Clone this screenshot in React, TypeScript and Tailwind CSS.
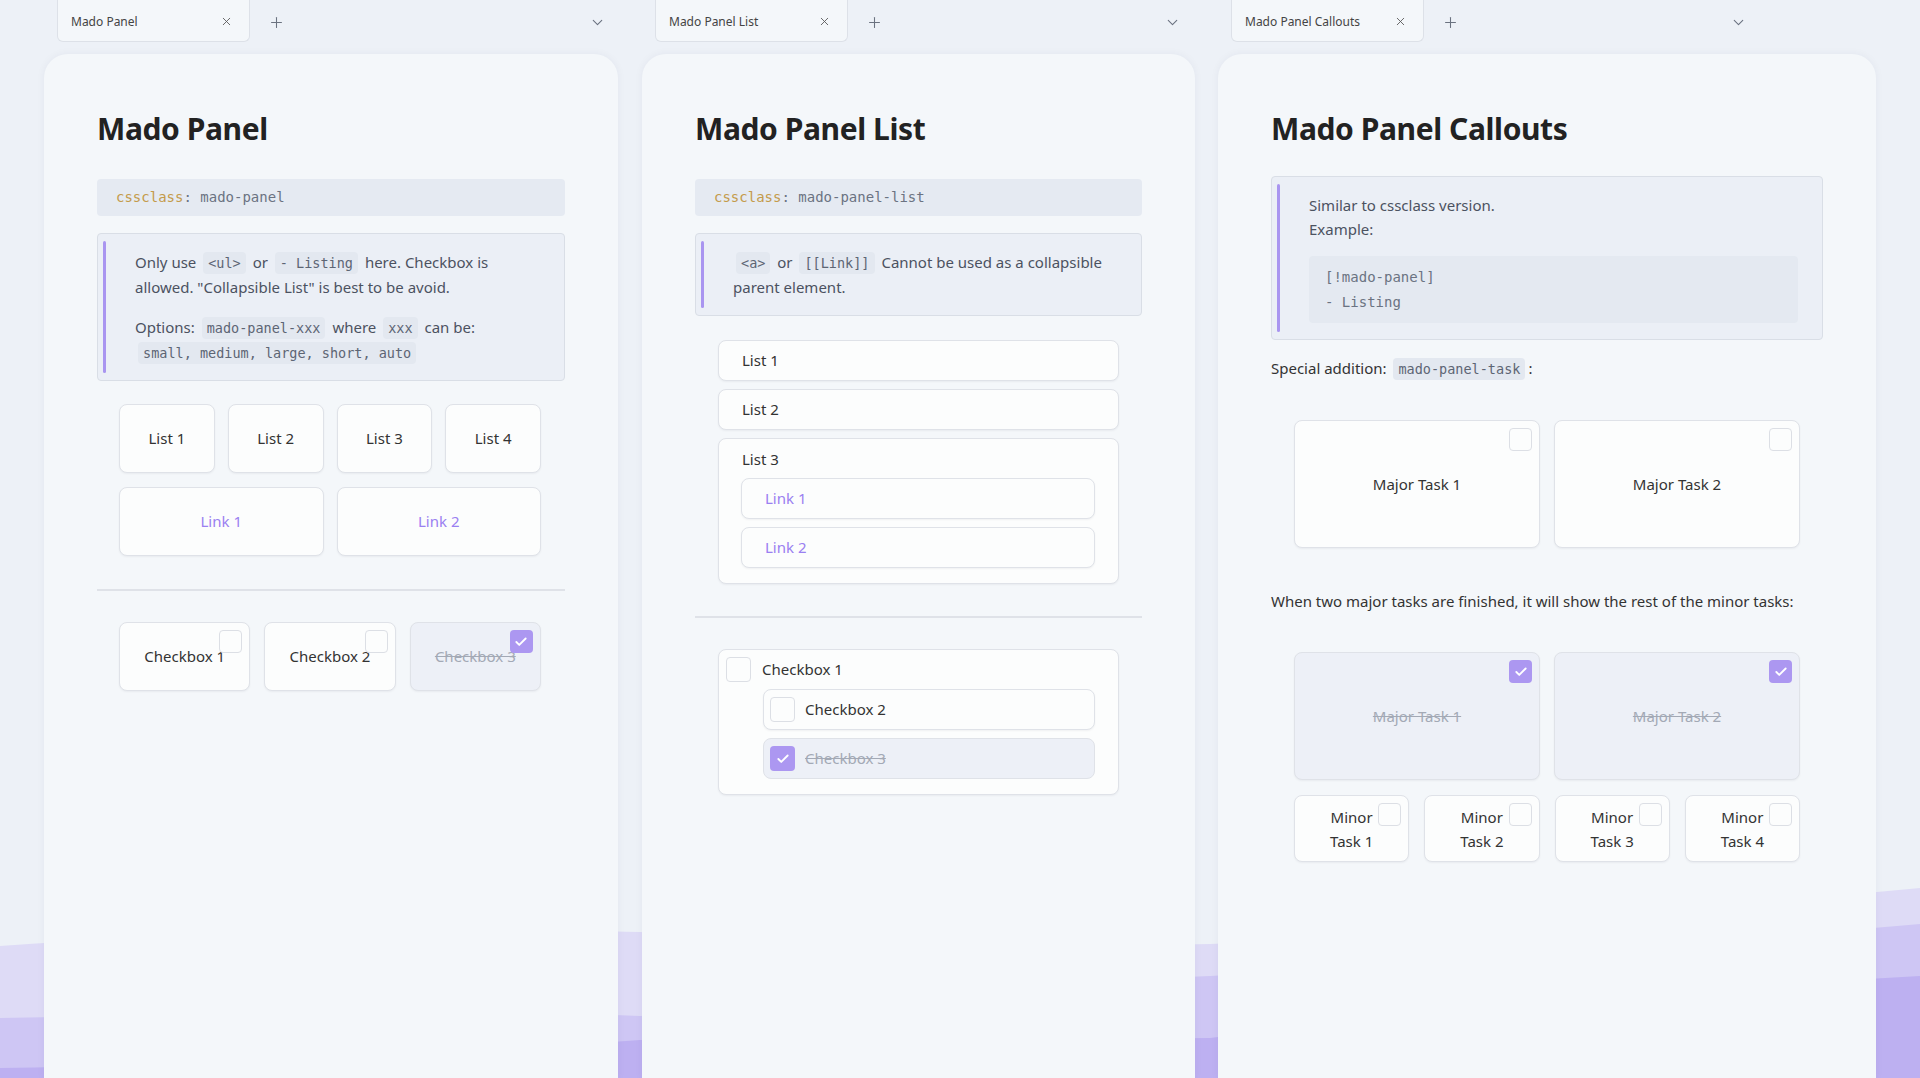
import React from "react";
import { X, Plus, ChevronDown, Check } from "lucide-react";

const card = "bg-[#fcfdfd] border border-[#dfe2e8] rounded-lg shadow-[0_1px_2px_rgba(15,23,42,0.05)]";
const mono = "font-['DejaVu_Sans_Mono',monospace]";

function Box({ checked, size = "h-[23px] w-[23px]" }: { checked?: boolean; size?: string }) {
  if (checked) {
    return (
      <span className={`${size} flex shrink-0 items-center justify-center rounded-[4px] bg-[#ac97f1]`}>
        <Check size={14} strokeWidth={3.2} className="text-white" />
      </span>
    );
  }
  return <span className={`${size} block shrink-0 rounded-[4px] border border-[#dcdfe5] bg-[#fcfdfd]`} />;
}

function Code({ children }: { children: React.ReactNode }) {
  return (
    <code className={`${mono} mx-[3px] rounded-[4px] bg-[#e3e8f0] px-[5px] py-[3px] text-[13.5px] leading-none text-[#5d6574]`}>
      {children}
    </code>
  );
}

function TabBar({ title, chevronGap }: { title: string; chevronGap: string }) {
  return (
    <div className="flex h-[42px] items-center">
      <div className="ml-[13px] flex h-[42px] w-[193px] items-center justify-between rounded-b-md border border-t-0 border-[#dde1e8] bg-[#f4f7fa] pl-[13px] pr-[16px] pt-[2px] text-[12px] text-[#444]">
        <span>{title}</span>
        <X size={13} strokeWidth={1.6} className="text-[#555]" />
      </div>
      <Plus size={17} strokeWidth={1.5} className="ml-[18px] mt-[2px] text-[#6b7280]" />
      <ChevronDown size={17} strokeWidth={1.5} className={`ml-auto mt-[2px] text-[#6b7280] ${chevronGap}`} />
    </div>
  );
}

function Panel({ children }: { children: React.ReactNode }) {
  return (
    <div className="mt-[12px] h-[1024px] rounded-t-[24px] bg-[#f4f7fa] px-[53px] pt-[56px] shadow-[0_0_8px_rgba(30,40,80,0.05)]">
      {children}
    </div>
  );
}

function Title({ children }: { children: React.ReactNode }) {
  return <h1 className="text-[30px] font-bold leading-[38px] tracking-[-0.4px] text-[#222]">{children}</h1>;
}

function CodeBlock({ value }: { value: string }) {
  return (
    <div className={`${mono} mt-[31px] flex h-[37px] items-center rounded-[4px] bg-[#e5eaf2] px-[19px] text-[14px]`}>
      <span className="text-[#c49b4b]">cssclass</span>
      <span className="text-[#6b7382]">: {value}</span>
    </div>
  );
}

function Callout({ children, className = "" }: { children: React.ReactNode; className?: string }) {
  return (
    <div className={`flex rounded-[4px] border border-[#d9dee6] bg-[#ebeff6] py-[7px] pl-[5px] ${className}`}>
      <span className="w-[3px] shrink-0 rounded bg-[#a995f0]" />
      <div className="flex-1 py-[9px] pl-[29px] pr-[24px] text-[15px] leading-[24.5px] text-[#4b5261]">{children}</div>
    </div>
  );
}

function Waves() {
  return (
    <svg className="absolute bottom-0 left-0 h-[220px] w-full" viewBox="0 0 1920 220" preserveAspectRatio="none">
      <path d="M0,88 C240,70 480,70 640,74 C860,80 1040,90 1210,86 C1450,78 1700,50 1920,30 L1920,220 L0,220 Z" fill="#dedbf6" />
      <path d="M0,160 C240,156 460,150 640,158 C860,150 1040,125 1210,118 C1450,105 1700,85 1920,66 L1920,220 L0,220 Z" fill="#cec6f4" />
      <path d="M0,210 C300,205 520,190 640,182 C860,178 1040,182 1210,180 C1450,150 1700,130 1920,118 L1920,220 L0,220 Z" fill="#bdb0f1" />
    </svg>
  );
}

function MadoPanel() {
  return (
    <div className="w-[574px] shrink-0">
      <TabBar title="Mado Panel" chevronGap="mr-[12px]" />
      <Panel>
        <Title>Mado Panel</Title>
        <CodeBlock value="mado-panel" />
        <Callout className="mt-[17px]">
          <p>
            Only use <Code>&lt;ul&gt;</Code> or <Code>- Listing</Code> here. Checkbox is
            <br />
            allowed. "Collapsible List" is best to be avoid.
          </p>
          <p className="mt-[16px]">
            Options: <Code>mado-panel-xxx</Code> where <Code>xxx</Code> can be:
            <br />
            <Code>small, medium, large, short, auto</Code>
          </p>
        </Callout>
        <div className="mt-[23px] grid grid-cols-4 gap-x-[13px] gap-y-[14px] pl-[22px] pr-[24px] text-[15px] text-[#333]">
          {["List 1", "List 2", "List 3", "List 4"].map((t) => (
            <div key={t} className={`${card} flex h-[69px] items-center justify-center`}>
              {t}
            </div>
          ))}
          {["Link 1", "Link 2"].map((t) => (
            <div key={t} className={`${card} col-span-2 flex h-[69px] items-center justify-center text-[#9a80f1]`}>
              {t}
            </div>
          ))}
        </div>
        <div className="mt-[33px] h-[2px] bg-[#dfe2e8]" />
        <div className="mt-[31px] grid grid-cols-3 gap-x-[14px] pl-[22px] pr-[24px] text-[15px] text-[#333]">
          {["Checkbox 1", "Checkbox 2", "Checkbox 3"].map((t, i) => {
            const done = i === 2;
            return (
              <div
                key={t}
                className={`relative flex h-[69px] items-center justify-center rounded-lg border border-[#dfe2e8] shadow-[0_1px_2px_rgba(15,23,42,0.05)] ${
                  done ? "bg-[#edf0f7] text-[#a3a9b5] line-through" : "bg-[#fcfdfd]"
                }`}
              >
                {t}
                <span className="absolute right-[7px] top-[7px]">
                  <Box checked={done} />
                </span>
              </div>
            );
          })}
        </div>
      </Panel>
    </div>
  );
}

function MadoPanelList() {
  return (
    <div className="w-[553px] shrink-0">
      <TabBar title="Mado Panel List" chevronGap="mr-[14px]" />
      <Panel>
        <Title>Mado Panel List</Title>
        <CodeBlock value="mado-panel-list" />
        <Callout className="mt-[17px]">
          <p>
            <Code>&lt;a&gt;</Code> or <Code>[[Link]]</Code> Cannot be used as a collapsible
            <br />
            parent element.
          </p>
        </Callout>
        <div className="mx-[23px] mt-[24px] flex flex-col gap-[8px] text-[15px] text-[#333]">
          <div className={`${card} flex h-[41px] items-center px-[23px]`}>List 1</div>
          <div className={`${card} flex h-[41px] items-center px-[23px]`}>List 2</div>
          <div className={`${card} px-[23px] pb-[15px] pt-[8px]`}>
            <div className="leading-[24px]">List 3</div>
            <div className="-ml-px mt-[7px] flex flex-col gap-[8px]">
              {["Link 1", "Link 2"].map((t) => (
                <div key={t} className={`${card} flex h-[41px] items-center pl-[23px] text-[#9a80f1]`}>
                  {t}
                </div>
              ))}
            </div>
          </div>
        </div>
        <div className="mt-[32px] h-[2px] bg-[#dfe2e8]" />
        <div className={`${card} mx-[23px] mt-[31px] pb-[15px] pl-[7px] pr-[23px] pt-[7px] text-[15px] text-[#333]`}>
          <div className="flex items-center gap-[11px]">
            <Box size="h-[25px] w-[25px]" />
            <span>Checkbox 1</span>
          </div>
          <div className="ml-[37px] mt-[7px] flex flex-col gap-[8px]">
            <div className={`${card} flex h-[41px] items-center gap-[10px] pl-[6px]`}>
              <Box size="h-[25px] w-[25px]" />
              <span>Checkbox 2</span>
            </div>
            <div className="flex h-[41px] items-center gap-[10px] rounded-lg border border-[#dfe2e8] bg-[#edf0f7] pl-[6px] text-[#a3a9b5] line-through">
              <Box checked size="h-[25px] w-[25px]" />
              <span>Checkbox 3</span>
            </div>
          </div>
        </div>
      </Panel>
    </div>
  );
}

function TaskCard({ label, done, tall }: { label: string; done?: boolean; tall?: boolean }) {
  return (
    <div
      className={`relative flex items-center justify-center rounded-lg border border-[#dfe2e8] text-center shadow-[0_1px_2px_rgba(15,23,42,0.05)] ${
        tall ? "h-[128px]" : "h-[67px] px-[24px] leading-[24px]"
      } ${done ? "bg-[#edf0f7] text-[#a3a9b5] line-through" : "bg-[#fcfdfd] text-[#333]"}`}
    >
      {label}
      <span className="absolute right-[7px] top-[7px]">
        <Box checked={done} />
      </span>
    </div>
  );
}

function MadoPanelCallouts() {
  return (
    <div className="ml-[23px] w-[658px] shrink-0">
      <TabBar title="Mado Panel Callouts" chevronGap="mr-[129px]" />
      <Panel>
        <Title>Mado Panel Callouts</Title>
        <Callout className="mt-[28px]">
          <div className="leading-[24px]">
            Similar to cssclass version.
            <br />
            Example:
          </div>
          <div className={`${mono} mt-[15px] rounded-[4px] bg-[#e4e9f1] px-[16px] py-[9px] text-[14px] leading-[24.5px] text-[#6b7382]`}>
            <div>[!mado-panel]</div>
            <div>- Listing</div>
          </div>
        </Callout>
        <p className="mt-[16px] text-[15px] leading-[24px] text-[#333]">
          Special addition: <Code>mado-panel-task</Code>:
        </p>
        <div className="mx-[23px] mt-[40px] grid grid-cols-2 gap-x-[14px] text-[15px]">
          <TaskCard label="Major Task 1" tall />
          <TaskCard label="Major Task 2" tall />
        </div>
        <p className="mt-[41px] text-[15px] leading-[24px] text-[#333]">
          When two major tasks are finished, it will show the rest of the minor tasks:
        </p>
        <div className="mx-[23px] mt-[39px] grid grid-cols-2 gap-x-[14px] text-[15px]">
          <TaskCard label="Major Task 1" tall done />
          <TaskCard label="Major Task 2" tall done />
        </div>
        <div className="mx-[23px] mt-[15px] grid grid-cols-4 gap-x-[15px] text-[15px]">
          {["Minor Task 1", "Minor Task 2", "Minor Task 3", "Minor Task 4"].map((t) => (
            <TaskCard key={t} label={t} />
          ))}
        </div>
      </Panel>
    </div>
  );
}

export default function App() {
  return (
    <div className="relative h-[1078px] w-[1920px] overflow-hidden bg-[#edf1f7] font-['Noto_Sans',sans-serif]">
      <Waves />
      <div className="relative flex pl-[44px]">
        <MadoPanel />
        <div className="w-[24px] shrink-0" />
        <MadoPanelList />
        <MadoPanelCallouts />
      </div>
    </div>
  );
}
